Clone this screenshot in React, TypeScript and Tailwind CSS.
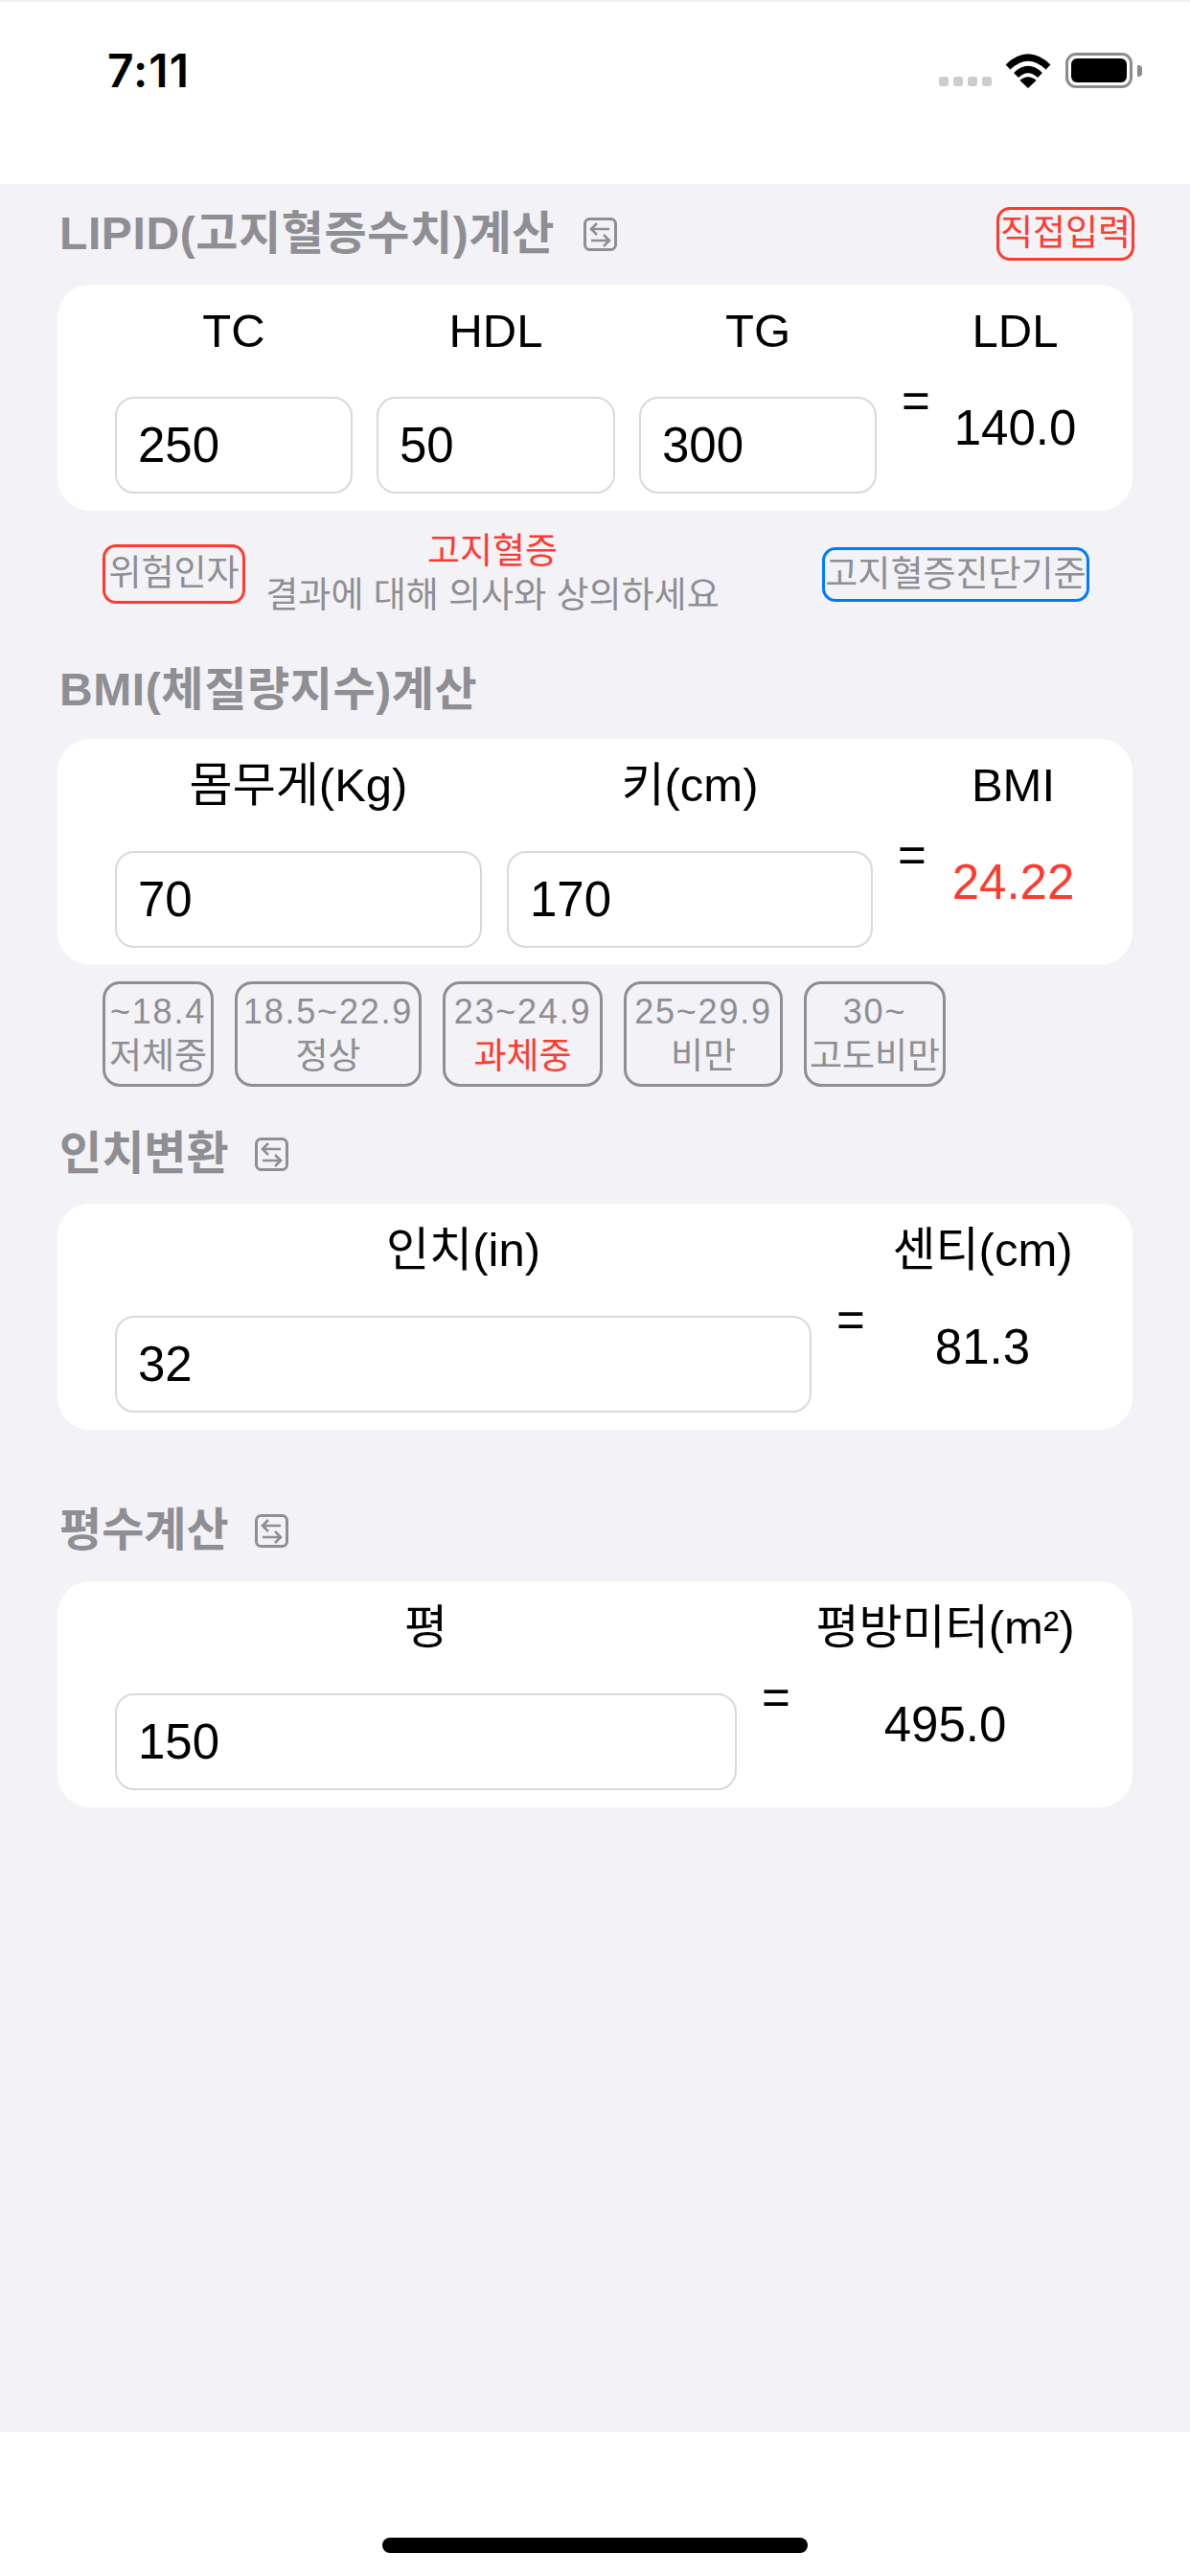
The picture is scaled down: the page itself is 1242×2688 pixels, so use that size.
import type { ReactNode } from 'react'

const RED = 'text-[#ff3b30]'

function SwapIcon() {
  return (
    <svg width="35" height="35" viewBox="0 0 35 35" fill="none" stroke="#8e8e93" strokeWidth="3" className="shrink-0">
      <rect x="1.5" y="1.5" width="32" height="32" rx="5" />
      <path d="M27 12H8M14 6l-6 6 6 6" strokeWidth="2.6" />
      <path d="M8 24h19M21 18l6 6-6 6" strokeWidth="2.6" />
    </svg>
  )
}

function WifiIcon() {
  return (
    <svg width="48" height="36" viewBox="0 0 48 36" fill="none">
      <path d="M3 14Q24-6 45 14" stroke="#000" strokeWidth="7" />
      <path d="M11.5 22.5Q24 10.5 36.5 22.5" stroke="#000" strokeWidth="7" />
      <path d="M24 36 15.5 28Q24 20.5 32.5 28Z" fill="#000" />
    </svg>
  )
}

function StatusBar() {
  return (
    <header className="flex h-[192px] items-start justify-between border-t-2 border-[#f0f0f2] bg-white pl-[112px] pr-[50px] pt-[44px]">
      <span className="font-['Inter',sans-serif] text-[48px] font-semibold leading-[56px] tracking-[1px] text-black">7:11</span>
      <div className="flex items-end pt-[9px]">
        <div className="mb-[2px] flex gap-[5px]">
          {[0, 1, 2, 3].map((i) => (
            <span key={i} className="h-[10px] w-[10px] rounded-[3px] bg-[#cccccc]" />
          ))}
        </div>
        <div className="ml-[14px]">
          <WifiIcon />
        </div>
        <div className="ml-[15px] flex items-center">
          <div className="h-[37px] w-[70px] rounded-[11px] border-[3px] border-[#8c8c8c] p-[3px]">
            <div className="h-full w-full rounded-[6px] bg-black" />
          </div>
          <div className="ml-[5px] h-[12px] w-[5px] rounded-r-[4px] bg-[#8c8c8c]" />
        </div>
      </div>
    </header>
  )
}

function SectionTitle({ title, icon = true, right, titleClass = '' }: { title: string; icon?: boolean; right?: ReactNode; titleClass?: string }) {
  return (
    <div className="flex h-[56px] items-center pl-[62px] pr-[58px]">
      <h2 className={'text-[48px] font-semibold leading-[56px] text-[#8e8e93] ' + titleClass}>{title}</h2>
      {icon && (
        <div className={right ? 'ml-[30px]' : 'ml-[27px]'}>
          <SwapIcon />
        </div>
      )}
      {right && <div className="ml-auto">{right}</div>}
    </div>
  )
}

function Field({ label, value, className }: { label: string; value: string; className: string }) {
  return (
    <div className={className}>
      <div className="flex h-[96px] items-center justify-center text-[49px] leading-[56px] text-black">{label}</div>
      <div className="mt-[21px] flex h-[101px] items-center rounded-[20px] border-2 border-[#d9d9d9] bg-white pl-[22px] pt-[2px] text-[51px] text-black">
        {value}
      </div>
    </div>
  )
}

function Result({ label, value, danger = false }: { label: string; value: string; danger?: boolean }) {
  return (
    <>
      <div className="ml-[26px] mt-[94px] h-[56px] w-[30px] text-center text-[51px] leading-[56px] text-black">=</div>
      <div className="flex-1">
        <div className="flex h-[96px] items-center justify-center text-[49px] leading-[56px] text-black">{label}</div>
        <div className={'mt-[26px] flex h-[56px] items-center justify-center text-[51px] ' + (danger ? RED : 'text-black')}>{value}</div>
      </div>
    </>
  )
}

function Card({ children }: { children: ReactNode }) {
  return <div className="mx-[60px] flex h-[236px] w-[1122px] rounded-[34px] bg-white pl-[60px] pr-[34px]">{children}</div>
}

const BMI_RANGES = [
  { range: '~18.4', name: '저체중', width: 'w-[116px]' },
  { range: '18.5~22.9', name: '정상', width: 'w-[195px]' },
  { range: '23~24.9', name: '과체중', width: 'w-[167px]', active: true },
  { range: '25~29.9', name: '비만', width: 'w-[166px]' },
  { range: '30~', name: '고도비만', width: 'w-[148px]' },
]

function OutlineButton({ label, className }: { label: string; className: string }) {
  return (
    <button className={'flex items-center justify-center whitespace-nowrap rounded-[14px] border-[3px] text-[37px] leading-[44px] ' + className}>
      {label}
    </button>
  )
}

export default function App() {
  return (
    <div className="flex h-[2688px] w-[1242px] flex-col overflow-hidden bg-[#f2f2f7] font-['Liberation_Sans','Noto_Sans_CJK_KR',sans-serif]">
      <StatusBar />

      <main className="flex-1">
        <div className="mt-[24px]">
          <SectionTitle
            title="LIPID(고지혈증수치)계산"
            titleClass="tracking-[0.6px]"
            right={<OutlineButton label="직접입력" className={'h-[56px] w-[144px] border-[#ff3b30] ' + RED} />}
          />
        </div>
        <div className="mt-[25px]">
          <Card>
            <div className="flex gap-[25px]">
              <Field label="TC" value="250" className="w-[248px]" />
              <Field label="HDL" value="50" className="w-[249px]" />
              <Field label="TG" value="300" className="w-[248px]" />
            </div>
            <Result label="LDL" value="140.0" />
          </Card>
        </div>

        <div className="flex items-start pl-[107px]">
          <OutlineButton label="위험인자" className="mt-[35px] h-[62px] w-[149px] border-[#ff3b30] text-[#8e8e93]" />
          <div className="w-[516px] pt-[20px] text-center text-[37px] leading-[46px]">
            <div className={RED}>고지혈증</div>
            <div className="text-[#8e8e93]">결과에 대해 의사와 상의하세요</div>
          </div>
          <OutlineButton label="고지혈증진단기준" className="ml-[86px] mt-[38px] h-[57px] w-[279px] border-[#007aff] text-[#8e8e93]" />
        </div>

        <div className="mt-[47px]">
          <SectionTitle title="BMI(체질량지수)계산" icon={false} titleClass="tracking-[0.6px]" />
        </div>
        <div className="mt-[23px]">
          <Card>
            <div className="flex gap-[26px]">
              <Field label="몸무게(Kg)" value="70" className="w-[383px]" />
              <Field label="키(cm)" value="170" className="w-[382px]" />
            </div>
            <Result label="BMI" value="24.22" danger />
          </Card>
        </div>

        <div className="mt-[17px] flex gap-[22px] pl-[107px]">
          {BMI_RANGES.map((item) => (
            <div
              key={item.range}
              className={'flex h-[110px] flex-col items-center justify-center rounded-[18px] border-[3px] border-[#8e8e93] text-[36px] leading-[47px] text-[#8e8e93] ' + item.width}
            >
              <span className="tracking-[1.8px]">{item.range}</span>
              <span className={'text-[37px] ' + (item.active ? RED : '')}>{item.name}</span>
            </div>
          ))}
        </div>

        <div className="mt-[42px]">
          <SectionTitle title="인치변환" />
        </div>
        <div className="mt-[24px]">
          <Card>
            <Field label="인치(in)" value="32" className="w-[727px]" />
            <Result label="센티(cm)" value="81.3" />
          </Card>
        </div>

        <div className="mt-[77px]">
          <SectionTitle title="평수계산" />
        </div>
        <div className="mt-[25px]">
          <Card>
            <Field label="평" value="150" className="w-[649px]" />
            <Result label="평방미터(m²)" value="495.0" />
          </Card>
        </div>
      </main>

      <footer className="flex h-[150px] justify-center bg-white pt-[110px]">
        <div className="h-[16px] w-[444px] rounded-full bg-black" />
      </footer>
    </div>
  )
}
